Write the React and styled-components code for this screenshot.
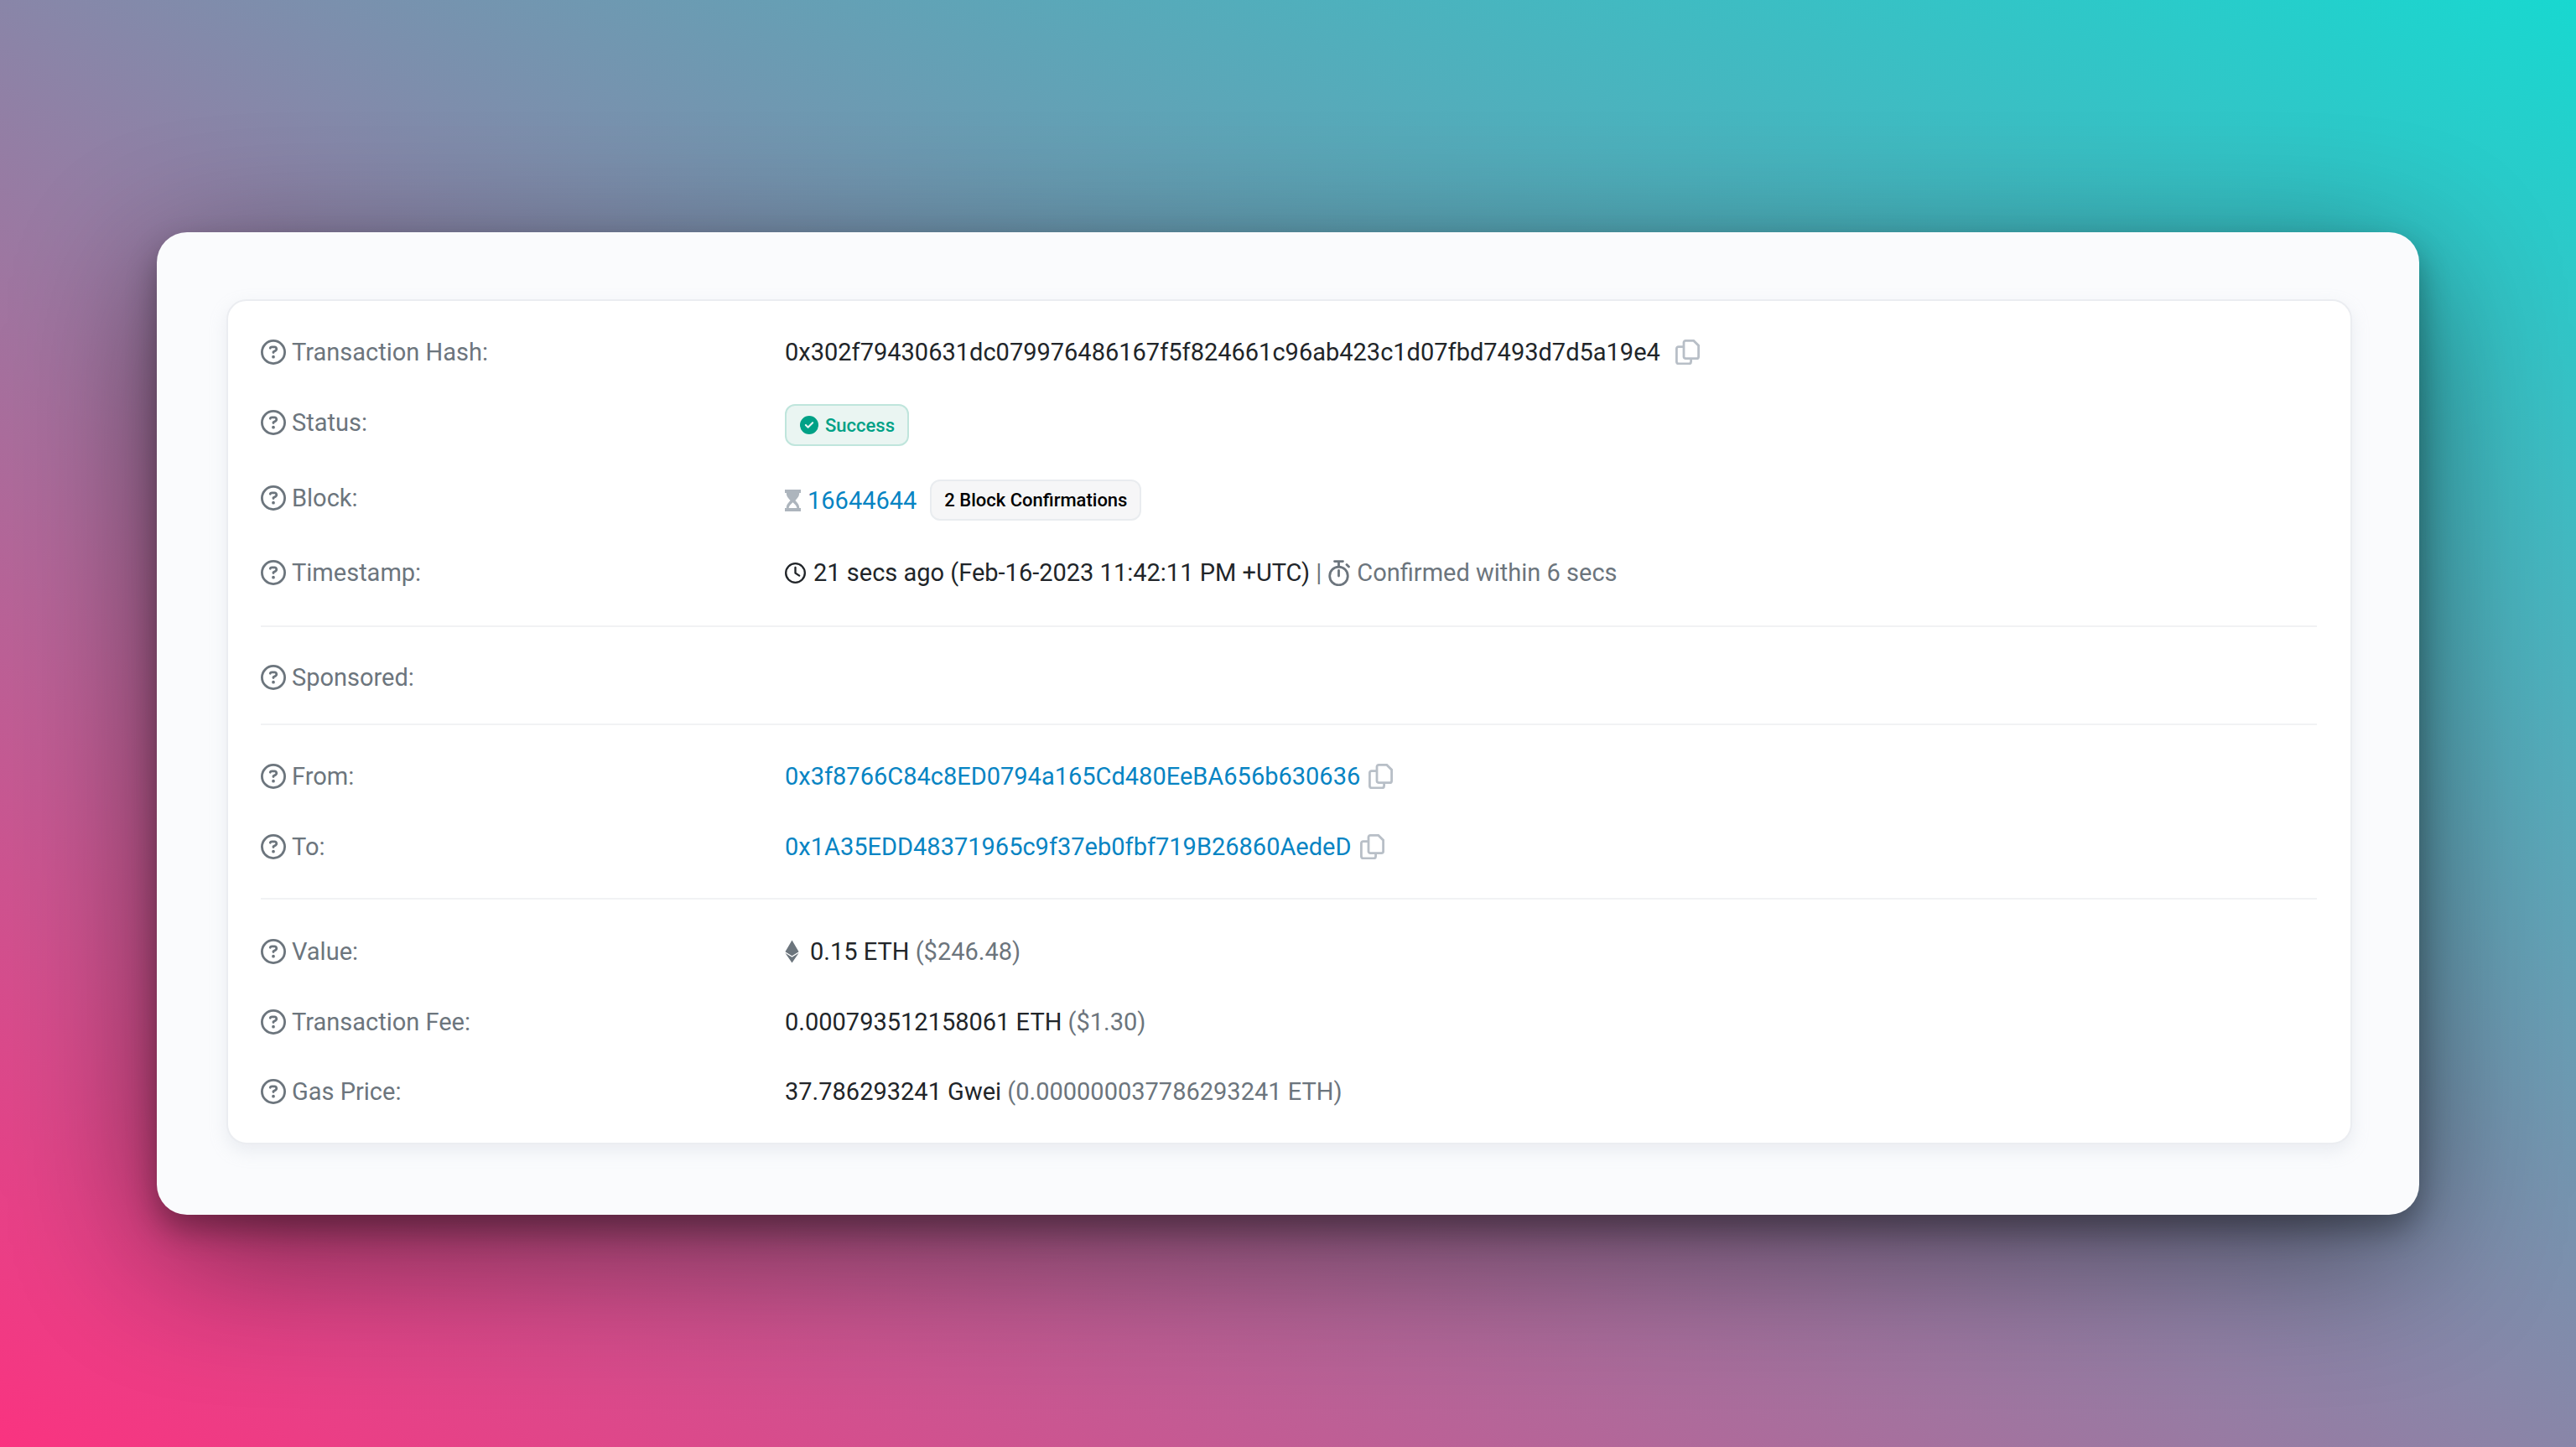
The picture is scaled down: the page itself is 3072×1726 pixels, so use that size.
import React from "react";
import styled, { createGlobalStyle } from "styled-components";
import { FaRegCircleQuestion, FaRegClock, FaEthereum, FaCircleCheck } from "react-icons/fa6";

const GlobalStyle = createGlobalStyle`
html, body {
  margin: 0;
  padding: 0;
}
body {
  font-family: Roboto, "Liberation Sans", sans-serif;
}
`;

const Background = styled.div`
  width: 3072px;
  height: 1726px;
  padding: 277px 187px;
  box-sizing: border-box;
  background: linear-gradient(to top right, #fa3380, #18d8d0);
`;

const Card = styled.div`
  height: 1172px;
  box-sizing: border-box;
  padding: 80px 80px 84px 83px;
  background-color: #fafbfd;
  border-radius: 36px;
  box-shadow: 0 18px 36px rgba(0, 0, 0, 0.32), 0 44px 170px rgba(0, 0, 0, 0.48);
`;

const Panel = styled.div`
  height: 100%;
  box-sizing: border-box;
  padding: 18px 40px 0 39px;
  background-color: #fff;
  border: 2px solid #ebedf1;
  border-radius: 24px;
  box-shadow: 0 8px 20px rgba(189, 197, 209, 0.25);
`;

const Row = styled.div`
  display: grid;
  grid-template-columns: 625px 1fr;
  align-items: center;
  height: ${props => props.$h}px;
  box-sizing: border-box;
  padding-top: 2px;
  font-size: 29px;
`;

const Label = styled.div`
  display: flex;
  align-items: center;
  gap: 7px;
  color: #6c757d;
  svg {
    width: 30px;
    height: 30px;
  }
`;

const Value = styled.div`
  display: flex;
  align-items: center;
  padding-top: ${props => props.$shift || 0}px;
  color: #212529;
  white-space: pre;
`;

const Muted = styled.span`
  color: #6c757d;
`;

const Address = styled.a`
  color: #0784c3;
  text-decoration: none;
`;

const Divider = styled.hr`
  margin: ${props => props.$top}px 0 ${props => props.$bottom}px;
  border: 0;
  border-top: 2px solid #f1f2f4;
`;

const CopyIcon = styled.svg`
  width: 29px;
  height: 30px;
  margin-left: ${props => props.$gap}px;
  fill: none;
  stroke: #b8bfc7;
  stroke-width: 2.8;
`;

const StatusBadge = styled.span`
  display: inline-flex;
  align-items: center;
  gap: 8px;
  height: 50px;
  width: 148px;
  box-sizing: border-box;
  padding-left: 16px;
  background-color: #eaf5f2;
  border: 2px solid #bfe5dc;
  border-radius: 12px;
  color: #00a186;
  font-size: 22px;
  font-weight: 500;
  svg {
    width: 22px;
    height: 22px;
  }
`;

const ConfirmBadge = styled.span`
  display: inline-flex;
  align-items: center;
  justify-content: center;
  height: 49px;
  width: 252px;
  margin-left: 16px;
  box-sizing: border-box;
  background-color: #f6f6f7;
  border: 2px solid #e9ecef;
  border-radius: 12px;
  color: #000;
  font-size: 22px;
  font-weight: 500;
`;

const GlyphSlot = styled.span`
  display: inline-flex;
  margin-right: ${props => props.$gap}px;
  color: ${props => props.$color};
  svg {
    width: ${props => props.$w}px;
    height: ${props => props.$h}px;
  }
`;

const Separator = styled.span`
  margin: 0 8px 0 7px;
  color: #6c757d;
`;

function Hourglass() {
  return (
    <svg viewBox="0 0 19 26" width="19" height="26">
      <path d="M0 0h19v4h-1.8c0 4.4-2.8 6.8-4.8 9 2 2.2 4.8 4.6 4.8 9H19v4H0v-4h1.8c0-4.4 2.8-6.8 4.8-9-2-2.2-4.8-4.6-4.8-9H0z" fill="#adb5bd" />
      <path d="M4.6 22c.4-3 2.9-5 4.9-6.8 2 1.8 4.5 3.8 4.9 6.8z" fill="#fff" />
    </svg>
  );
}

function Stopwatch() {
  return (
    <svg viewBox="0 0 26 31" width="26" height="31" fill="none" stroke="#6c757d" strokeWidth="2.8">
      <circle cx="12.5" cy="19" r="10.8" />
      <path d="M7.5 1.6h10M12.5 2v6M12.5 12.5v6.5M22 5.5l2.5 2.5" strokeLinecap="round" />
    </svg>
  );
}

function Copy({ gap }) {
  return (
    <CopyIcon $gap={gap} viewBox="0 0 29 30">
      <path d="M10 3.6a2.2 2.2 0 0 1 2.2-2.2h9.6l5.8 5.8v13.2a2.2 2.2 0 0 1-2.2 2.2H12.2a2.2 2.2 0 0 1-2.2-2.2z" />
      <path d="M10 8.6H3.6a2.2 2.2 0 0 0-2.2 2.2v15.8a2.2 2.2 0 0 0 2.2 2.2h12.8a2.2 2.2 0 0 0 2.2-2.2v-4" />
    </CopyIcon>
  );
}

function Field({ h, label, shift, children }) {
  return (
    <Row $h={h}>
      <Label>
        <FaRegCircleQuestion />
        {label}
      </Label>
      <Value $shift={shift}>{children}</Value>
    </Row>
  );
}

export default function App() {
  return (
    <>
      <GlobalStyle />
      <Background>
        <Card>
          <Panel>
            <Field h={84} label="Transaction Hash:">
              0x302f79430631dc079976486167f5f824661c96ab423c1d07fbd7493d7d5a19e4
              <Copy gap={18} />
            </Field>
            <Field h={84} label="Status:" shift={6}>
              <StatusBadge>
                <FaCircleCheck />
                Success
              </StatusBadge>
            </Field>
            <Field h={96} label="Block:" shift={5}>
              <GlyphSlot $gap={8}>
                <Hourglass />
              </GlyphSlot>
              <Address>16644644</Address>
              <ConfirmBadge>2 Block Confirmations</ConfirmBadge>
            </Field>
            <Field h={82} label="Timestamp:">
              <GlyphSlot $gap={9} $w={25} $h={25} $color="#212529">
                <FaRegClock />
              </GlyphSlot>
              21 secs ago (Feb-16-2023 11:42:11 PM +UTC)
              <Separator>|</Separator>
              <GlyphSlot $gap={8}>
                <Stopwatch />
              </GlyphSlot>
              <Muted>Confirmed within 6 secs</Muted>
            </Field>
            <Divider $top={23} $bottom={24} />
            <Field h={70} label="Sponsored:" />
            <Divider $top={21} $bottom={24} />
            <Field h={72} label="From:">
              <Address>0x3f8766C84c8ED0794a165Cd480EeBA656b630636</Address>
              <Copy gap={10} />
            </Field>
            <Field h={96} label="To:">
              <Address>0x1A35EDD48371965c9f37eb0fbf719B26860AedeD</Address>
              <Copy gap={10} />
            </Field>
            <Divider $top={14} $bottom={25} />
            <Field h={72} label="Value:">
              <GlyphSlot $gap={13} $w={17} $h={28} $color="#6c757d">
                <FaEthereum />
              </GlyphSlot>
              0.15 ETH <Muted>($246.48)</Muted>
            </Field>
            <Field h={96} label="Transaction Fee:">
              0.000793512158061 ETH <Muted>($1.30)</Muted>
            </Field>
            <Field h={70} label="Gas Price:">
              37.786293241 Gwei <Muted>(0.000000037786293241 ETH)</Muted>
            </Field>
          </Panel>
        </Card>
      </Background>
    </>
  );
}
